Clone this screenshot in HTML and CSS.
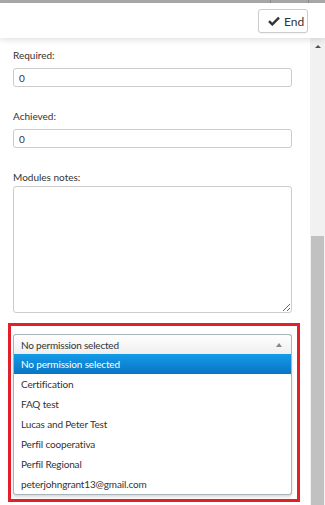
FILE: index.html
```html
<!doctype html>
<html lang="en">
  <head>
    <meta charset="UTF-8" />
    <meta name="viewport" content="width=device-width, initial-scale=1.0" />
    <title>Modules</title>
    <link rel="stylesheet" href="styles.css">
  </head>
  <body>
    <div class="topbar">
      <span class="divider d1"></span>
      <span class="divider d2"></span>
    </div>

    <div class="header">
      <button class="end-btn">
        <svg width="12" height="10" viewBox="0 0 12 10">
          <path d="M1 5.2 L4.3 8.4 L11 1.6" fill="none" stroke="#333" stroke-width="2.4" />
        </svg>
        End
      </button>
    </div>

    <div class="main">
      <div class="content">
        <div class="field">
          <label>Required:</label>
          <input type="text" value="0" />
        </div>

        <div class="field">
          <label>Achieved:</label>
          <input type="text" value="0" />
        </div>

        <div class="field notes">
          <label>Modules notes:</label>
          <textarea></textarea>
        </div>

        <div class="highlight">
          <div class="select-box">
            <span>No permission selected</span>
            <span class="arrow"></span>
          </div>
          <ul class="options">
            <li class="active">No permission selected</li>
            <li>Certification</li>
            <li>FAQ test</li>
            <li>Lucas and Peter Test</li>
            <li>Perfil cooperativa</li>
            <li>Perfil Regional</li>
            <li>peterjohngrant13@gmail.com</li>
          </ul>
        </div>
      </div>

      <div class="scrollbar">
        <div class="scroll-up"></div>
        <div class="scroll-thumb"></div>
      </div>
    </div>
  </body>
</html>
```

FILE: styles.css
```css
body {
  font-family: Lato, "Open Sans", sans-serif;
  margin: 0;
  background: #fff;
  color: #333;
  width: 325px;
  height: 505px;
  overflow: hidden;
}

.topbar {
  height: 3px;
  background: #a9a9a9;
  position: relative;
}

.divider {
  position: absolute;
  top: 0;
  width: 1px;
  height: 3px;
  background: #8c8c8c;
}

.d1 {
  left: 270px;
}

.d2 {
  left: 308px;
}

.header {
  height: 35px;
  display: flex;
  justify-content: flex-end;
  align-items: center;
  padding-right: 17px;
  background: #fff;
  box-shadow: 0 2px 6px rgba(0, 0, 0, 0.12);
  position: relative;
  z-index: 1;
}

.end-btn {
  display: flex;
  align-items: center;
  gap: 4px;
  height: 24px;
  width: 50px;
  margin-top: 1px;
  padding: 0 0 0 9px;
  border: 1px solid #ccc;
  border-radius: 3px;
  background: #fff;
  font-family: Lato, sans-serif;
  font-size: 12px;
  color: #333;
  box-shadow: 0 1px 1px rgba(0, 0, 0, 0.05);
}

.main {
  display: flex;
  height: 467px;
}

.content {
  flex: 1;
  padding: 10px 0 0 8px;
}

.field {
  display: flex;
  flex-direction: column;
  padding-left: 5px;
  margin-bottom: 22px;
}

.field label {
  font-size: 10px;
  line-height: 14px;
  margin-bottom: 6px;
}

.field input {
  width: 279px;
  height: 19px;
  box-sizing: border-box;
  border: 1px solid #ccc;
  border-radius: 3px;
  padding: 0 5px;
  font-family: Lato, sans-serif;
  font-size: 10px;
  color: #333;
}

.notes {
  margin-bottom: 10px;
}

.notes label {
  margin-bottom: 2px;
}

.field textarea {
  width: 279px;
  height: 127px;
  box-sizing: border-box;
  border: 1px solid #ccc;
  border-radius: 3px;
  resize: vertical;
}

.highlight {
  width: 292px;
  box-sizing: border-box;
  border: 3px solid #e3202a;
  padding: 8px 5px 4px 2px;
}

.select-box {
  display: flex;
  justify-content: space-between;
  align-items: center;
  height: 20px;
  box-sizing: border-box;
  padding: 0 9px 0 7px;
  border: 1px solid #aab4b8;
  border-bottom: none;
  border-radius: 3px 3px 0 0;
  background: linear-gradient(#fff, #eee);
  font-size: 10px;
  letter-spacing: -0.2px;
}

.arrow {
  width: 0;
  height: 0;
  border-left: 3px solid transparent;
  border-right: 3px solid transparent;
  border-bottom: 4px solid #888;
}

.options {
  list-style: none;
  margin: 0;
  padding: 0;
  border: 1px solid #aab4b8;
  border-top: none;
  border-radius: 0 0 3px 3px;
  box-shadow: 0 2px 3px rgba(0, 0, 0, 0.15);
}

.options li {
  height: 20px;
  line-height: 20px;
  padding-left: 7px;
  font-size: 10px;
  letter-spacing: -0.15px;
  color: #333;
}

.options li.active {
  background: linear-gradient(#139be9, #0a74c4);
  color: #fff;
}

.scrollbar {
  width: 15px;
  margin-left: 1px;
  background: #f1f1f1;
  display: flex;
  flex-direction: column;
  align-items: center;
}

.scroll-up {
  width: 0;
  height: 0;
  margin-top: 7px;
  border-left: 3px solid transparent;
  border-right: 3px solid transparent;
  border-bottom: 3px solid #505050;
}

.scroll-thumb {
  width: 13px;
  margin-top: 188px;
  flex: 1;
  background: #c1c1c1;
}
```
